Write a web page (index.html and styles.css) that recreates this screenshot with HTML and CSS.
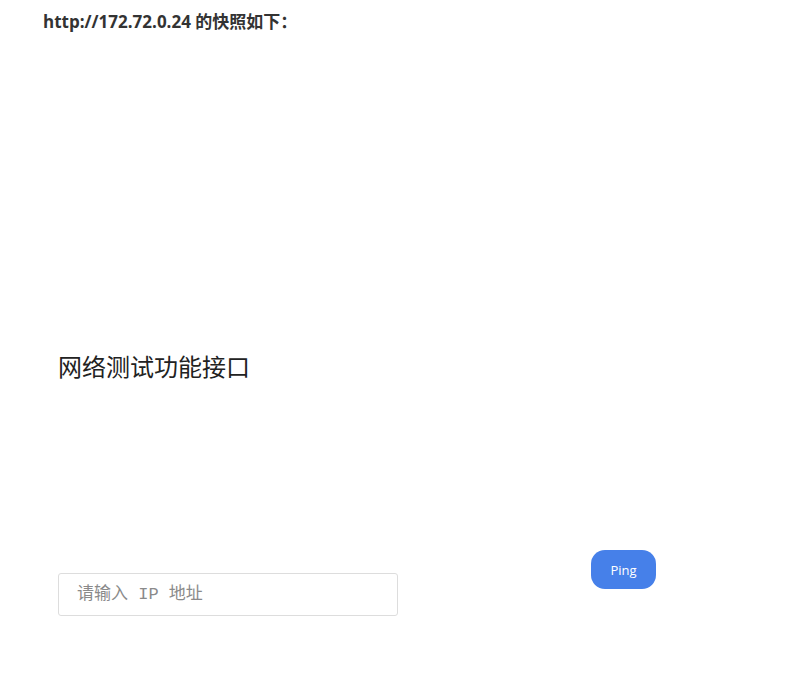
FILE: index.html
```html
<!DOCTYPE html>
<html lang="zh">
<head>
  <meta charset="UTF-8" />
  <title>网络测试功能接口</title>
  <link rel="stylesheet" href="styles.css">
</head>
<body>
  <header class="snap-head">http://172.72.0.24 的快照如下：</header>

  <main class="panel">
    <h1 class="panel-title">网络测试功能接口</h1>

    <form class="ping-form">
      <input type="text" class="ip-input" placeholder="请输入 IP 地址">
      <button type="button" class="ping-btn">Ping</button>
    </form>
  </main>
</body>
</html>
```

FILE: styles.css
```css
body {
  margin: 0;
  background: #fff;
  color: #333;
  font-family: 'Open Sans', 'Noto Sans CJK SC', sans-serif;
}
.snap-head {
  padding: 11px 43px 0;
  font-size: 17px;
  line-height: 22px;
  font-weight: bold;
  color: #333;
}
.panel {
  padding: 0 58px;
}
.panel-title {
  margin: 320px 0 0;
  font-family: 'Liberation Serif', 'Noto Sans CJK SC', serif;
  font-size: 24px;
  line-height: 30px;
  font-weight: normal;
  color: #222;
}
.ping-form {
  margin-top: 167px;
  display: flex;
  align-items: flex-start;
  gap: 193px;
}
.ip-input {
  margin-top: 23px;
  width: 340px;
  height: 43px;
  box-sizing: border-box;
  padding: 0 18px;
  border: 1px solid #ddd;
  border-radius: 3px;
  font-family: 'Liberation Mono', 'Noto Sans CJK SC', monospace;
  font-size: 17px;
  color: #333;
  outline: none;
}
.ip-input::placeholder {
  color: #8a8a8a;
}
.ping-btn {
  width: 65px;
  height: 39px;
  background: #4680e9;
  color: #fff;
  border: none;
  border-radius: 14px;
  font-family: 'Open Sans', sans-serif;
  font-size: 13px;
  cursor: pointer;
}
```
